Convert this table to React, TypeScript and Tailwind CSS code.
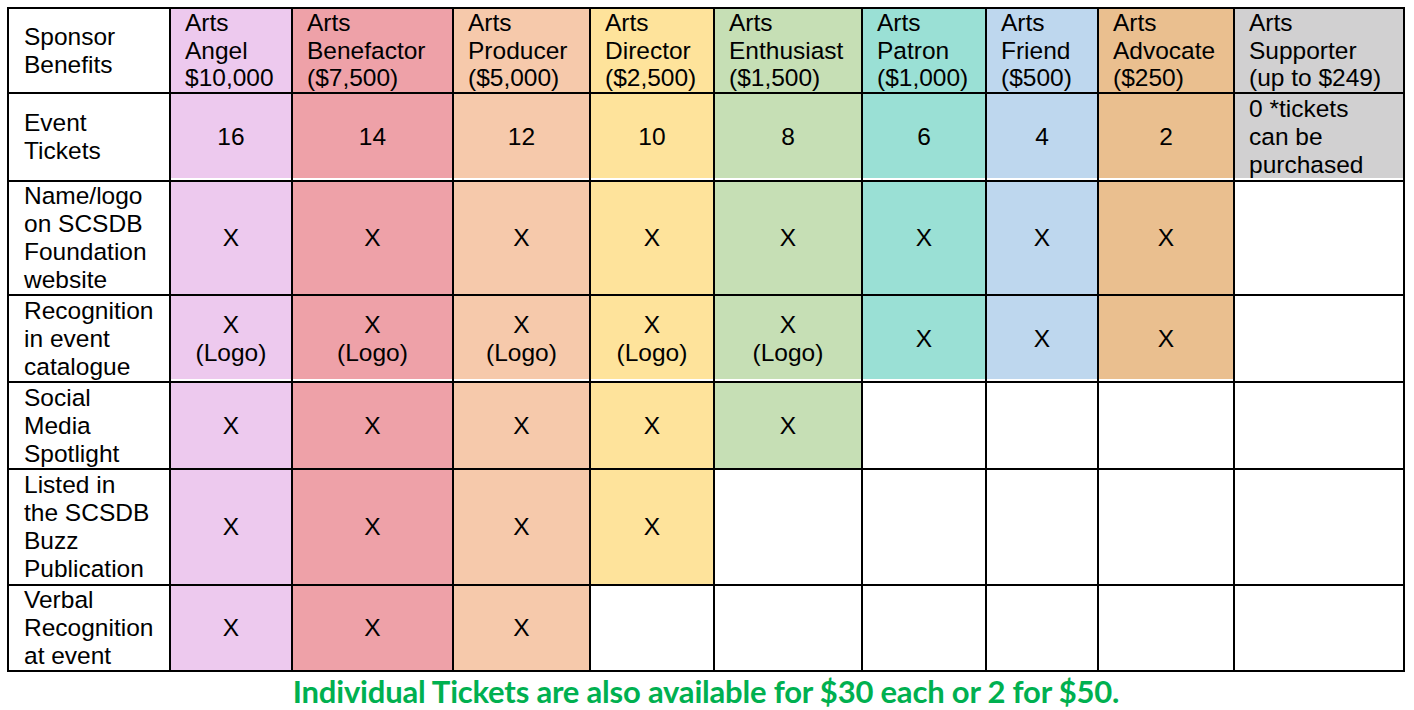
const tiers = [
  { name: 'Angel', price: '$10,000', tickets: '16', bg: 'bg-[#edc9ee]' },
  { name: 'Benefactor', price: '($7,500)', tickets: '14', bg: 'bg-[#eea1a8]' },
  { name: 'Producer', price: '($5,000)', tickets: '12', bg: 'bg-[#f6c9ab]' },
  { name: 'Director', price: '($2,500)', tickets: '10', bg: 'bg-[#fee39b]' },
  { name: 'Enthusiast', price: '($1,500)', tickets: '8', bg: 'bg-[#c6dfb5]' },
  { name: 'Patron', price: '($1,000)', tickets: '6', bg: 'bg-[#9ae0d5]' },
  { name: 'Friend', price: '($500)', tickets: '4', bg: 'bg-[#bed7ee]' },
  { name: 'Advocate', price: '($250)', tickets: '2', bg: 'bg-[#eabf8f]' },
  { name: 'Supporter', price: '(up to $249)', tickets: '', bg: 'bg-[#d1d0d1]' },
];

// how many tiers (from the left) get each benefit
const benefits: { label: string[]; upTo: number; logoUpTo?: number; gap?: boolean }[] = [
  { label: ['Name/logo', 'on SCSDB', 'Foundation', 'website'], upTo: 8 },
  { label: ['Recognition', 'in event', 'catalogue'], upTo: 8, logoUpTo: 5, gap: true },
  { label: ['Social', 'Media', 'Spotlight'], upTo: 5 },
  { label: ['Listed in', 'the SCSDB', 'Buzz', 'Publication'], upTo: 4 },
  { label: ['Verbal', 'Recognition', 'at event'], upTo: 3 },
];

function Lines({ lines }: { lines: string[] }) {
  return (
    <div>
      {lines.map((l) => (
        <div key={l} className="whitespace-nowrap">
          {l}
        </div>
      ))}
    </div>
  );
}

export default function App() {
  return (
    <div
      className="h-[710px] w-[1414px] bg-white pl-[7px] pt-[7px] text-black"
      style={{ fontFamily: '"Liberation Sans", Arial, sans-serif' }}
    >
      <div className="grid w-[1398px] grid-cols-[160px_120px_159px_135px_122px_146px_122px_110px_134px_168px] grid-rows-[83px_86px_112px_85px_85px_114px_84px] gap-[2px] border-2 border-black bg-black text-[24.5px] leading-[28px]">
        {/* header */}
        <div className="flex items-center bg-white pl-[15px]">
          <Lines lines={['Sponsor', 'Benefits']} />
        </div>
        {tiers.map((t) => (
          <div key={t.name} className={`overflow-visible pl-[14px] leading-[27.5px] ${t.bg}`}>
            <Lines lines={['Arts', t.name, t.price]} />
          </div>
        ))}

        {/* tickets */}
        <div className="flex items-center bg-white pl-[15px]">
          <Lines lines={['Event', 'Tickets']} />
        </div>
        {tiers.map((t) =>
          t.tickets ? (
            <div
              key={t.name}
              className={`flex items-center justify-center shadow-[inset_0_-2px_0_white] ${t.bg}`}
            >
              {t.tickets}
            </div>
          ) : (
            <div key={t.name} className={`flex items-center pl-[14px] shadow-[inset_0_-2px_0_white] ${t.bg}`}>
              <Lines lines={['0 *tickets', 'can be', 'purchased']} />
            </div>
          ),
        )}

        {benefits.map((b) => (
          <Row key={b.label[0]} b={b} />
        ))}
      </div>
      <div
        className="mt-[1px] w-[1398px] text-center text-[31px] font-bold leading-[36px] tracking-[-0.2px] text-[#00b050]"
        style={{ fontFamily: 'Lato, "Open Sans", sans-serif' }}
      >
        Individual Tickets are also available for $30 each or 2 for $50.
      </div>
    </div>
  );
}

function Row({ b }: { b: (typeof benefits)[number] }) {
  return (
    <>
      <div className="flex items-center bg-white pl-[15px]">
        <Lines lines={b.label} />
      </div>
      {tiers.map((t, i) => {
        const on = i < b.upTo;
        const logo = b.logoUpTo != null && i < b.logoUpTo;
        return (
          <div
            key={t.name}
            className={`flex flex-col items-center justify-center ${on ? t.bg : 'bg-white'} ${
              on && b.gap ? 'shadow-[inset_0_-2px_0_white]' : ''
            }`}
          >
            {on && <div>X</div>}
            {logo && <div>(Logo)</div>}
          </div>
        );
      })}
    </>
  );
}
